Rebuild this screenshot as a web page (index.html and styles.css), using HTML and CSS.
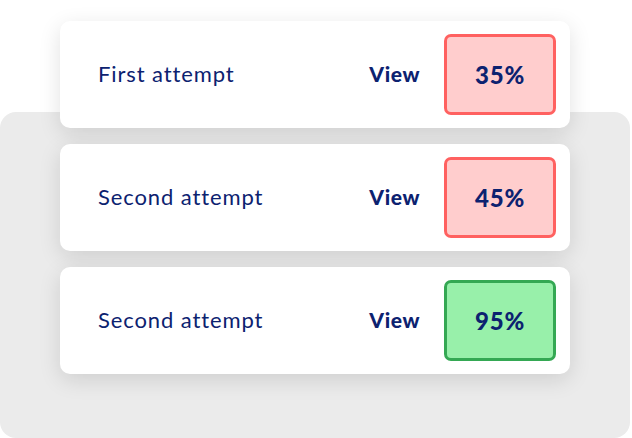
FILE: index.html
```html
<!DOCTYPE html>
<html lang="en">
<head>
    <meta charset="UTF-8">
    <meta name="viewport" content="width=device-width, initial-scale=1.0">
    <title>Attempts</title>
    <link rel="stylesheet" href="styles.css">
</head>
<body>
    <div class="stage">
        <div class="panel">
            <ul class="attempts">
                <li class="attempt">
                    <span class="attempt-name">First attempt</span>
                    <a class="attempt-view" href="#">View</a>
                    <span class="score score-low">35%</span>
                </li>
                <li class="attempt">
                    <span class="attempt-name">Second attempt</span>
                    <a class="attempt-view" href="#">View</a>
                    <span class="score score-low">45%</span>
                </li>
                <li class="attempt">
                    <span class="attempt-name">Second attempt</span>
                    <a class="attempt-view" href="#">View</a>
                    <span class="score score-high">95%</span>
                </li>
            </ul>
        </div>
    </div>
</body>
</html>
```

FILE: styles.css
```css
body {
    margin: 0;
    padding: 0;
    background: #fff;
    font-family: Lato, "Open Sans", sans-serif;
    color: #0c2270;
    overflow: hidden;
}

.stage {
    padding-top: 112px;
}

.panel {
    width: 630px;
    height: 326px;
    background: #ebebeb;
    border-radius: 16px;
}

.attempts {
    list-style: none;
    margin: 0;
    padding: 0;
    position: relative;
    top: -91px;
    width: 510px;
    margin-left: 60px;
    display: flex;
    flex-direction: column;
    gap: 16px;
}

.attempt {
    height: 107px;
    box-sizing: border-box;
    background: #fff;
    border-radius: 10px;
    box-shadow: 0 6px 22px rgba(0, 0, 0, 0.12);
    display: flex;
    align-items: center;
    padding: 0 14px 0 38px;
}

.attempt-name {
    flex: 1;
    font-size: 22px;
    letter-spacing: 0.9px;
    margin-top: -2px;
}

.attempt-view {
    color: #0c2270;
    font-weight: 900;
    font-size: 21px;
    letter-spacing: 0.6px;
    text-decoration: none;
    margin-right: 24px;
    margin-top: -2px;
}

.score {
    width: 112px;
    height: 81px;
    box-sizing: border-box;
    border: 3px solid;
    border-radius: 7px;
    display: flex;
    align-items: center;
    justify-content: center;
    font-weight: 900;
    font-size: 24px;
    letter-spacing: 0.8px;
}

.score-low {
    background: #ffcdcd;
    border-color: #ff6160;
}

.score-high {
    background: #98f0aa;
    border-color: #34a853;
}
```
